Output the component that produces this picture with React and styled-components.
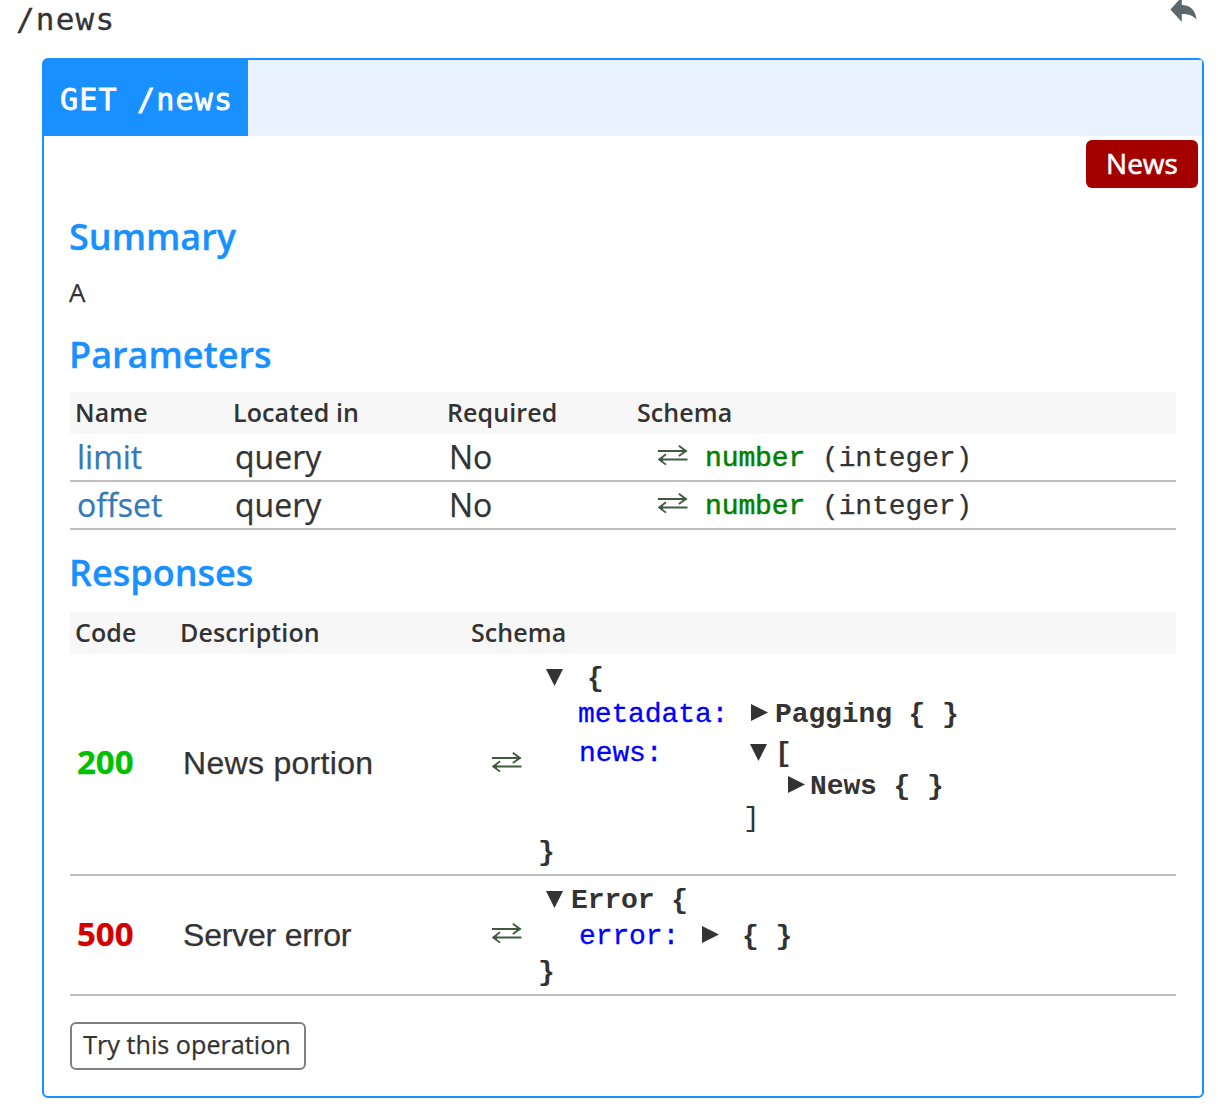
import React from "react";
import styled, { createGlobalStyle } from "styled-components";

const GlobalStyle = createGlobalStyle`
  * { box-sizing: border-box; }
  html, body { margin: 0; padding: 0; background: #fff; }
  body {
    color: #333;
    font-family: "Open Sans", "Noto Sans", sans-serif;
    overflow: hidden;
  }
`;

const BLUE = "#1890ff";
const mono = `"Liberation Mono", "Courier New", monospace`;
const code = `"DejaVu Sans Mono", monospace`;

const Page = styled.main`
  width: 1218px;
  height: 1120px;
  overflow: hidden;
`;

const PathBar = styled.header`
  display: flex;
  justify-content: space-between;
  height: 58px;
  padding: 0 21px 0 16px;
`;

const PathTitle = styled.h2`
  margin: 0;
  height: 40px;
  font: 400 31px/39px ${code};
  letter-spacing: 1.2px;
  -webkit-text-stroke: 0.3px #333;
`;

const Card = styled.section`
  display: flex;
  flex-direction: column;
  width: 1162px;
  height: 1040px;
  margin-left: 42px;
  border: 2px solid ${BLUE};
  border-radius: 6px;
`;

const CardHeader = styled.div`
  display: flex;
  height: 76px;
  flex: none;
  background: #e8f3ff;
`;

const Operation = styled.h3`
  margin: 0;
  width: 204px;
  height: 76px;
  padding-left: 16px;
  background: ${BLUE};
  color: #fff;
  font: 400 30px/79px ${code};
  letter-spacing: 1.2px;
  -webkit-text-stroke: 0.8px #fff;
  white-space: pre;
`;

const Tags = styled.div`
  display: flex;
  justify-content: flex-end;
  padding: 4px 4px 0 0;
`;

const Tag = styled.span`
  width: 112px;
  height: 48px;
  border-radius: 6px;
  background: #a50000;
  color: #fff;
  font-size: 28px;
  line-height: 47px;
  text-align: center;
  -webkit-text-stroke: 0.6px #fff;
`;

const Body = styled.div`
  padding: 25px 26px 0;
`;

const Heading = styled.h4`
  margin: 0 0 0 -1px;
  color: ${BLUE};
  font-size: 36px;
  font-weight: 600;
  line-height: 48px;
  -webkit-text-stroke: 0.3px ${BLUE};
`;

const Summary = styled.p`
  margin: 17px 0 25px -1px;
  font-size: 26px;
  line-height: 28px;
  -webkit-text-stroke: 0.25px #333;
`;

const Table = styled.div`
  display: grid;
  margin: ${(p) => p.$margin};
`;

const Row = styled.div`
  display: grid;
  grid-template-columns: ${(p) => p.$columns};
  align-items: center;
  height: ${(p) => p.$height}px;
  padding-left: 7px;
  border-bottom: 2px solid #bfbfbf;
`;

const HeadRow = styled(Row)`
  height: 42px;
  padding: 0 0 2px 5px;
  border: 0;
  background: #f7f7f7;
  font-size: 25px;
  font-weight: 600;
  letter-spacing: 0.1px;
`;

const Cell = styled.div`
  padding-bottom: 1px;
  font-size: 32px;
  line-height: 40px;
  -webkit-text-stroke: 0.25px currentColor;
`;

const ParamLink = styled(Cell)`
  color: #337ab7;
`;

const Status = styled(Cell)`
  padding-bottom: ${(p) => p.$bottom}px;
  color: ${(p) => p.$color};
  font-size: 33px;
  font-weight: 700;
`;

const Description = styled(Cell)`
  padding: 0 0 ${(p) => p.$bottom}px 1px;
  font-family: "Liberation Sans", Arial, sans-serif;
  letter-spacing: ${(p) => p.$spacing || "0"};
`;

const SchemaCell = styled.div`
  display: flex;
  align-items: center;
  height: 100%;
  padding-left: 19px;
  font: 400 28px/32px ${mono};
  letter-spacing: -0.1px;
  white-space: pre;
`;

const TypeText = styled.span`
  padding-top: 3px;
  -webkit-text-stroke: 0.25px currentColor;
`;

const TypeName = styled(TypeText)`
  margin-left: 17px;
  color: #008000;
  -webkit-text-stroke: 0.5px #008000;
`;

const Tree = styled.div`
  align-self: flex-start;
  padding: ${(p) => p.$top}px 0 0 20px;
`;

const Line = styled.div`
  display: flex;
  align-items: center;
  height: ${(p) => p.$height}px;
  padding-left: ${(p) => p.$indent || 0}px;
  font-weight: ${(p) => (p.$light ? 400 : 700)};
`;

const ClosingBrace = styled(Line)`
  margin-left: -4px;
`;

const Key = styled.span`
  width: ${(p) => p.$width}px;
  padding-top: 2px;
  color: #0000ff;
  font-weight: 400;
  -webkit-text-stroke: 0.3px #0000ff;
`;

const Label = styled.span`
  margin-left: ${(p) => p.$gap}px;
  padding-top: 1px;
`;

const Icon = styled.svg`
  display: block;
  flex: none;
`;

const Exchange = styled(Icon)`
  margin-top: -4px;
`;

const Toggle = styled(Icon)`
  margin: ${(p) => (p.$open ? "-2px 0 0 -1px" : "-4px 1px 0 -1px")};
  fill: #333;
`;

const TryButton = styled.button`
  display: block;
  width: 236px;
  height: 48px;
  padding: 0 2px 4px 0;
  border: 2px solid #808080;
  border-radius: 6px;
  background: #fff;
  color: #333;
  font: 400 25.2px/40px "Open Sans", "Noto Sans", sans-serif;
  white-space: nowrap;
  -webkit-text-stroke: 0.25px #333;
`;

const ReplyIcon = () => (
  <Icon width="27" height="24" viewBox="0 0 27 24" fill="#5a676b">
    <path d="M0.4 9.4 11.8 -3V5.1C20 5.1 25.6 10.2 26.5 19.4C23 15.2 18 13.8 11.8 13.9V22Z" />
  </Icon>
);

const SwitchIcon = () => (
  <Exchange width="30" height="20" viewBox="0 0 30 20" fill="none" stroke="#3f5a3f" strokeWidth="1.8">
    <path d="M0 6H28M20.8 0.8 28 6 20.8 11M29.5 14.5H1M8 9.3 1.2 14.5 8 19.6" />
    <path d="M24.5 3.8 29.4 6 24.5 8.3ZM4.8 12.3 0 14.5 4.8 16.8Z" fill="#3f5a3f" stroke="none" />
  </Exchange>
);

const Opened = () => (
  <Toggle $open width="17" height="17" viewBox="0 0 17 17">
    <path d="M0 0H17L8.5 17Z" />
  </Toggle>
);

const Closed = () => (
  <Toggle width="17" height="17" viewBox="0 0 17 17">
    <path d="M0 0 17 8.5 0 17Z" />
  </Toggle>
);

const paramColumns = "158px 214px 190px 1fr";
const responseColumns = "105px 291px 1fr";

const parameters = [
  { name: "limit", place: "query", required: "No", type: "number", format: "integer" },
  { name: "offset", place: "query", required: "No", type: "number", format: "integer" },
];

export default function App() {
  return (
    <Page>
      <GlobalStyle />
      <PathBar>
        <PathTitle>/news</PathTitle>
        <ReplyIcon />
      </PathBar>
      <Card>
        <CardHeader>
          <Operation>GET /news</Operation>
        </CardHeader>
        <Tags>
          <Tag>News</Tag>
        </Tags>
        <Body>
          <Heading>Summary</Heading>
          <Summary>A</Summary>

          <Heading>Parameters</Heading>
          <Table $margin="13px 0 19px">
            <HeadRow $columns={paramColumns}>
              <span>Name</span>
              <span>Located in</span>
              <span>Required</span>
              <span>Schema</span>
            </HeadRow>
            {parameters.map((p) => (
              <Row key={p.name} $columns={paramColumns} $height={48}>
                <ParamLink>{p.name}</ParamLink>
                <Cell>{p.place}</Cell>
                <Cell>{p.required}</Cell>
                <SchemaCell>
                  <SwitchIcon />
                  <TypeName>{p.type}</TypeName>
                  <TypeText> ({p.format})</TypeText>
                </SchemaCell>
              </Row>
            ))}
          </Table>

          <Heading>Responses</Heading>
          <Table $margin="15px 0 26px">
            <HeadRow $columns={responseColumns}>
              <span>Code</span>
              <span>Description</span>
              <span>Schema</span>
            </HeadRow>
            <Row $columns={responseColumns} $height={222}>
              <Status $color="#00c000" $bottom={5}>200</Status>
              <Description $spacing="0.3px" $bottom={3}>News portion</Description>
              <SchemaCell>
                <SwitchIcon />
                <Tree $top={6}>
                  <Line $height={36} $indent={5}>
                    <Opened />
                    <Label $gap={24}>{"{"}</Label>
                  </Line>
                  <Line $height={36} $indent={36}>
                    <Key $width={174}>metadata:</Key>
                    <Closed />
                    <Label $gap={6}>{"Pagging { }"}</Label>
                  </Line>
                  <Line $height={42} $indent={37}>
                    <Key $width={172}>news:</Key>
                    <Opened />
                    <Label $gap={8}>[</Label>
                  </Line>
                  <Line $height={24} $indent={247}>
                    <Closed />
                    <Label $gap={4}>{"News { }"}</Label>
                  </Line>
                  <Line $height={42} $indent={201} $light>
                    ]
                  </Line>
                  <ClosingBrace $height={26}>{"}"}</ClosingBrace>
                </Tree>
              </SchemaCell>
            </Row>
            <Row $columns={responseColumns} $height={120}>
              <Status $color="#d40000" $bottom={3}>500</Status>
              <Description $spacing="-0.2px" $bottom={1}>Server error</Description>
              <SchemaCell>
                <SwitchIcon />
                <Tree $top={6}>
                  <Line $height={36} $indent={5}>
                    <Opened />
                    <Label $gap={8}>{"Error {"}</Label>
                  </Line>
                  <Line $height={36} $indent={37}>
                    <Key $width={124}>error:</Key>
                    <Closed />
                    <Label $gap={22}>{"{ }"}</Label>
                  </Line>
                  <ClosingBrace $height={38}>{"}"}</ClosingBrace>
                </Tree>
              </SchemaCell>
            </Row>
          </Table>
          <TryButton>Try this operation</TryButton>
        </Body>
      </Card>
    </Page>
  );
}
